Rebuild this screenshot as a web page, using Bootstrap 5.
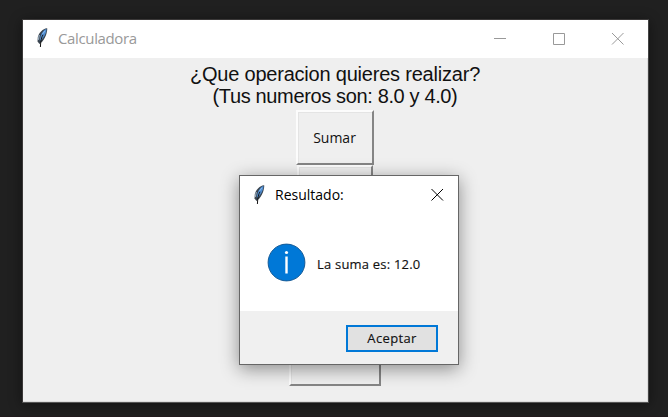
<!DOCTYPE html>
<html lang="es">
<head>
<meta charset="utf-8">
<title>Calculadora</title>
<link rel="stylesheet" href="https://cdn.jsdelivr.net/npm/bootstrap@5.3.0/dist/css/bootstrap.min.css">
<style>
html,body{height:417px;overflow:hidden}
body{background:#202020;font-family:"Open Sans","Noto Sans",sans-serif;color:#000;padding:19px 19px 0 22px;border-bottom:1px solid #211a1d}
.win{width:627px;height:384px;border:1px solid #3a3838;border-right-color:#444;border-bottom-color:#555;background:#efefef;box-shadow:0 2px 12px rgba(0,0,0,.45)}
.titlebar{height:38px;background:#fff;padding:0 0 2px 12px;line-height:36px;color:#999}
.feather{width:14px;height:22px;flex:none}
.win-title{font-size:15px;margin-left:9px;letter-spacing:-.36px;white-space:nowrap}
.controls{gap:46px;padding-right:24px}
.controls svg,.close-x{width:13px;height:13px;display:block}
.workspace{height:344px;border:solid #dcdcdc;border-width:0 1px 1px 0;padding-top:5px}
.question{font:20px/22px "Liberation Sans",Arial,sans-serif;color:#111;white-space:nowrap;margin-bottom:3px}
.question div{width:max-content;margin:auto}
.q1{letter-spacing:-.21px}
.q2{letter-spacing:-.36px}
.tk-btn{display:block;height:55px;background:#efefef;border:2px solid;border-color:#fcfcfc #858585 #858585 #fcfcfc;border-radius:0;padding:0 1px 0 0;font-size:14px;line-height:50px;color:#111;box-shadow:inset 1px 1px #e4e4e4;flex:none}
.w-a{width:78px}.w-b{width:76px}.w-c{width:92px;height:56px}
.dialog-box{left:239px;top:175px;width:220px;height:190px;background:#fff;border:1px solid #666;box-shadow:0 4px 17px rgba(0,0,0,.42)}
.dialog-head{height:37px;padding:0 14px 0 12px}
.dialog-title{font-size:14px;margin-left:9px;white-space:nowrap}
.dialog-main{height:98px;padding:0 0 0 27px}
.info{width:39px;height:39px;margin-top:1px}
.message{font-size:13px;margin:6px 0 0 11px;white-space:nowrap;color:#111;letter-spacing:.2px;-webkit-text-stroke:.15px #111}
.dialog-foot{height:53px;background:#f0f0f0;padding:14px 20px 0 0}
.accept{width:92px;height:27px;background:#e1e1e1;border:2px solid #0078d7;outline:0;border-radius:0;padding:0;font-size:13px;line-height:23px;color:#111;letter-spacing:.35px;-webkit-text-stroke:.15px #111}
</style>
<script src="https://cdn.jsdelivr.net/npm/bootstrap@5.3.0/dist/js/bootstrap.bundle.min.js"></script>
</head>
<body>
<svg width="0" height="0" class="position-absolute">
  <symbol id="feather" viewBox="0 0 14 22">
    <path d="M12 1.200C7.800 1.800 4 5.500 2.800 10L2.500 14.500L4.500 17C8.500 14.500 12 8 12.300 1.800Z" fill="#39444f"/>
    <path d="M11.200 2C8 3.200 5 8 4.800 14C8.500 11.500 11.400 6.500 11.500 2Z" fill="#4f8dd2"/>
    <path d="M4.300 8L3.400 12.800" stroke="#98adc0" stroke-width="1.200"/>
    <path d="M8 7.800C6.500 10 5.600 14 5.400 20" stroke="#161616" stroke-width="1" fill="none"/>
    <path d="M10 3.800L7.500 7" stroke="#86b9ee" stroke-width="1"/>
  </symbol>
</svg>
<main class="win">
  <header class="titlebar d-flex align-items-center">
    <svg class="feather"><use href="#feather"/></svg>
    <span class="win-title">Calculadora</span>
    <div class="controls d-flex ms-auto">
      <svg viewBox="0 0 13 13"><path d="M1 6.500H13" stroke="#999"/></svg>
      <svg viewBox="0 0 13 13"><path d="M1.500 1.500H12.500V12.500H1.500Z" stroke="#999" fill="none"/></svg>
      <svg viewBox="0 0 13 13"><path d="M1 1L12.500 12.500M12.500 1L1 12.500" stroke="#999"/></svg>
    </div>
  </header>
  <section class="workspace d-flex flex-column align-items-center">
    <div class="question"><div class="q1">¿Que operacion quieres realizar?</div><div class="q2">(Tus numeros son: 8.0 y 4.0)</div></div>
    <button class="btn tk-btn w-a">Sumar</button>
    <button class="btn tk-btn w-b"></button>
    <button class="btn tk-btn w-b"></button>
    <button class="btn tk-btn w-b"></button>
    <button class="btn tk-btn w-c"></button>
  </section>
</main>
<section class="dialog-box position-absolute" role="dialog">
  <header class="dialog-head d-flex align-items-center">
    <svg class="feather"><use href="#feather"/></svg>
    <span class="dialog-title">Resultado:</span>
    <svg class="close-x ms-auto" viewBox="0 0 13 13"><path d="M.5 1L12 12.500M12 1L.5 12.500" stroke="#000" stroke-width="1"/></svg>
  </header>
  <div class="dialog-main d-flex align-items-center">
    <svg class="info" viewBox="0 0 39 39"><circle cx="19.500" cy="19.500" r="18.400" fill="#0078d7" stroke="#155a96" stroke-width="1"/><path d="M19.500 13.500V30.500" stroke="#fff" stroke-width="2.400"/><circle cx="19.500" cy="9.500" r="1.600" fill="#fff"/></svg>
    <span class="message">La suma es: 12.0</span>
  </div>
  <footer class="dialog-foot d-flex justify-content-end align-items-start"><button class="btn accept">Aceptar</button></footer>
</section>
</body>
</html>
